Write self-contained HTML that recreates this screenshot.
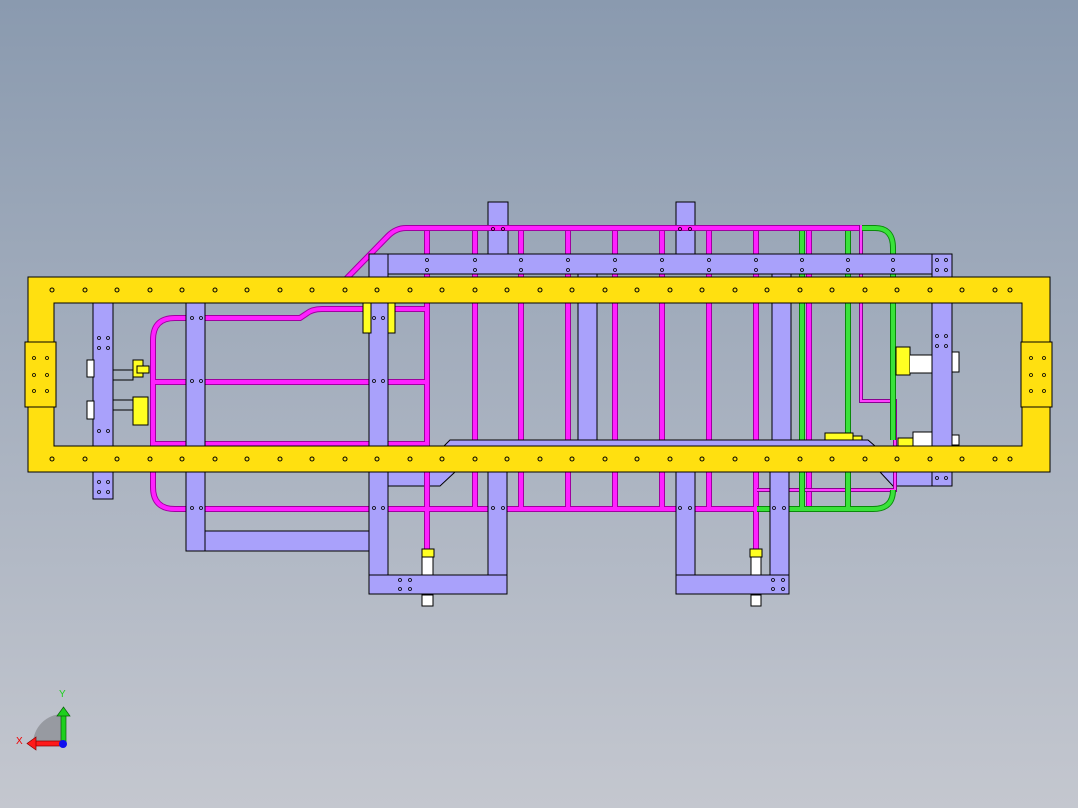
<!DOCTYPE html>
<html><head><meta charset="utf-8"><style>
html,body{margin:0;padding:0;}
body{width:1078px;height:808px;overflow:hidden;background:linear-gradient(#8a9aaf,#c3c6ce);}
svg{display:block}
</style></head><body>
<svg width="1078" height="808" viewBox="0 0 1078 808" xmlns="http://www.w3.org/2000/svg" font-family="Liberation Sans, sans-serif">
<defs>
<linearGradient id="bg" x1="0" y1="0" x2="0" y2="1"><stop offset="0" stop-color="#8a9aaf"/><stop offset="1" stop-color="#c4c7cf"/></linearGradient>
</defs>
<rect width="1078" height="808" fill="url(#bg)"/>

<g fill="#a9a1fb" stroke="#000" stroke-width="1">
<rect x="488" y="202" width="20" height="60"/>
<rect x="676" y="202" width="19" height="60"/>
<rect x="186" y="531" width="190" height="20"/>
<rect x="369" y="575" width="138" height="19"/>
<rect x="676" y="575" width="113" height="19"/>
<polygon points="388,472 455,472 440,486 388,486"/>
<polygon points="880,472 933,472 933,486 893,486"/>
</g>

<g fill="none" stroke-linecap="butt">
<g stroke="#a000a0" stroke-width="6">
<path d="M345,280 L388,236 Q396,228 406,228 L862,228"/>
<path d="M425,309 L322,309 Q312,309 306,314 L300,318 L175,318 Q153,318 153,340 L153,487 Q153,509 175,509 L757,509"/>
<path d="M155,382 L425,382 M155,444 L425,444"/>
<path d="M427,231 V575 M475,231 V508 M521,231 V508 M568,231 V508 M615,231 V508 M662,231 V508 M709,231 V508 M756,231 V555 M809,231 V508"/>
</g>
<g stroke="#ff20ff" stroke-width="4">
<path d="M345,280 L388,236 Q396,228 406,228 L862,228"/>
<path d="M425,309 L322,309 Q312,309 306,314 L300,318 L175,318 Q153,318 153,340 L153,487 Q153,509 175,509 L757,509"/>
<path d="M155,382 L425,382 M155,444 L425,444"/>
<path d="M427,231 V575 M475,231 V508 M521,231 V508 M568,231 V508 M615,231 V508 M662,231 V508 M709,231 V508 M756,231 V555 M809,231 V508"/>
</g>
<g stroke="#8a0090" stroke-width="4"><path d="M861,225 V401 H895 V490 H757"/></g>
<g stroke="#ff40ff" stroke-width="2"><path d="M861,225 V401 H895 V490 H757"/></g>
<g stroke="#0a8a0a" stroke-width="6"><path d="M862,228 L875,228 Q893,228 893,248 V440 M757,509 L873,509 Q893,509 893,490 M802,231 V508 M848,231 V508"/></g>
<g stroke="#3ae23a" stroke-width="4"><path d="M862,228 L875,228 Q893,228 893,248 V440 M757,509 L873,509 Q893,509 893,490 M802,231 V508 M848,231 V508"/></g>
</g>

<g fill="#a9a1fb" stroke="#000" stroke-width="1">
<rect x="369" y="254" width="582" height="20"/>
<rect x="932" y="254" width="20" height="232"/>
<rect x="369" y="254" width="19" height="321"/>
<rect x="488" y="472" width="19" height="103"/>
<rect x="676" y="472" width="19" height="103"/>
<rect x="770" y="472" width="19" height="103"/>
<rect x="93" y="303" width="20" height="196"/>
<rect x="186" y="303" width="19" height="248"/>
<rect x="578" y="274" width="19" height="172"/>
<rect x="772" y="274" width="19" height="172"/>
<polygon points="450,440 868,440 875,446 444,446"/>
</g>

<g stroke="#000" stroke-width="1">
<rect x="87" y="360" width="7" height="17" fill="#fff"/>
<rect x="87" y="401" width="7" height="18" fill="#fff"/>
<path d="M113,370 H133 V380 H113" fill="none"/>
<path d="M113,400 H133 V410 H113" fill="none"/>
<rect x="133" y="360" width="10" height="17" fill="#ffff22"/>
<rect x="137" y="366" width="12" height="7" fill="#ffff22"/>
<rect x="133" y="397" width="15" height="28" fill="#ffff22"/>
<rect x="363" y="303" width="8" height="30" fill="#ffff22"/>
<rect x="388" y="303" width="7" height="30" fill="#ffff22"/>
</g>
<g stroke="#000" stroke-width="1">
<rect x="896" y="347" width="14" height="28" fill="#ffff22"/>
<path d="M910,355 H932 V373 H910" fill="#fff"/>
<rect x="952" y="352" width="7" height="20" fill="#fff"/>
<rect x="952" y="435" width="7" height="10" fill="#fff"/>
<path d="M913,446 V432 H932 V446" fill="#fff"/>
<rect x="898" y="438" width="15" height="8" fill="#ffff22"/>
<rect x="825" y="433" width="28" height="7" fill="#ffff22"/>
<rect x="853" y="436" width="9" height="4" fill="#ffff22"/>
</g>
<g stroke="#000" stroke-width="1">
<rect x="422" y="549" width="12" height="8" fill="#ffff22"/>
<rect x="422" y="557" width="11" height="18" fill="#fff"/>
<rect x="422" y="595" width="11" height="11" fill="#fff"/>
<rect x="750" y="549" width="12" height="8" fill="#ffff22"/>
<rect x="751" y="557" width="10" height="18" fill="#fff"/>
<rect x="751" y="595" width="10" height="11" fill="#fff"/>
</g>

<path d="M28,277 H1050 V472 H28 Z M54,303 V446 H1022 V303 Z" fill="#ffe010" fill-rule="evenodd" stroke="#000" stroke-width="1"/>
<rect x="25" y="342" width="31" height="65" fill="#ffe010" stroke="#000"/>
<rect x="1021" y="342" width="31" height="65" fill="#ffe010" stroke="#000"/>

<g fill="none" stroke="#000" stroke-width="1">
<circle cx="52" cy="290" r="2"/><circle cx="85" cy="290" r="2"/><circle cx="117" cy="290" r="2"/><circle cx="150" cy="290" r="2"/><circle cx="182" cy="290" r="2"/><circle cx="215" cy="290" r="2"/><circle cx="247" cy="290" r="2"/><circle cx="280" cy="290" r="2"/><circle cx="312" cy="290" r="2"/><circle cx="345" cy="290" r="2"/><circle cx="377" cy="290" r="2"/><circle cx="410" cy="290" r="2"/><circle cx="442" cy="290" r="2"/><circle cx="475" cy="290" r="2"/><circle cx="507" cy="290" r="2"/><circle cx="540" cy="290" r="2"/><circle cx="572" cy="290" r="2"/><circle cx="605" cy="290" r="2"/><circle cx="637" cy="290" r="2"/><circle cx="670" cy="290" r="2"/><circle cx="702" cy="290" r="2"/><circle cx="735" cy="290" r="2"/><circle cx="767" cy="290" r="2"/><circle cx="800" cy="290" r="2"/><circle cx="832" cy="290" r="2"/><circle cx="865" cy="290" r="2"/><circle cx="897" cy="290" r="2"/><circle cx="930" cy="290" r="2"/><circle cx="962" cy="290" r="2"/><circle cx="995" cy="290" r="2"/><circle cx="1010" cy="290" r="2"/>
<circle cx="52" cy="459" r="2"/><circle cx="85" cy="459" r="2"/><circle cx="117" cy="459" r="2"/><circle cx="150" cy="459" r="2"/><circle cx="182" cy="459" r="2"/><circle cx="215" cy="459" r="2"/><circle cx="247" cy="459" r="2"/><circle cx="280" cy="459" r="2"/><circle cx="312" cy="459" r="2"/><circle cx="345" cy="459" r="2"/><circle cx="377" cy="459" r="2"/><circle cx="410" cy="459" r="2"/><circle cx="442" cy="459" r="2"/><circle cx="475" cy="459" r="2"/><circle cx="507" cy="459" r="2"/><circle cx="540" cy="459" r="2"/><circle cx="572" cy="459" r="2"/><circle cx="605" cy="459" r="2"/><circle cx="637" cy="459" r="2"/><circle cx="670" cy="459" r="2"/><circle cx="702" cy="459" r="2"/><circle cx="735" cy="459" r="2"/><circle cx="767" cy="459" r="2"/><circle cx="800" cy="459" r="2"/><circle cx="832" cy="459" r="2"/><circle cx="865" cy="459" r="2"/><circle cx="897" cy="459" r="2"/><circle cx="930" cy="459" r="2"/><circle cx="962" cy="459" r="2"/><circle cx="995" cy="459" r="2"/><circle cx="1010" cy="459" r="2"/>
</g>
<g fill="none" stroke="#000" stroke-width="0.8">
<circle cx="34" cy="358" r="1.5"/><circle cx="47" cy="358" r="1.5"/><circle cx="34" cy="375" r="1.5"/><circle cx="47" cy="375" r="1.5"/><circle cx="34" cy="391" r="1.5"/><circle cx="47" cy="391" r="1.5"/>
<circle cx="1031" cy="358" r="1.5"/><circle cx="1044" cy="358" r="1.5"/><circle cx="1031" cy="375" r="1.5"/><circle cx="1044" cy="375" r="1.5"/><circle cx="1031" cy="391" r="1.5"/><circle cx="1044" cy="391" r="1.5"/>
<circle cx="427" cy="260" r="1.5"/><circle cx="427" cy="270" r="1.5"/><circle cx="475" cy="260" r="1.5"/><circle cx="475" cy="270" r="1.5"/><circle cx="521" cy="260" r="1.5"/><circle cx="521" cy="270" r="1.5"/><circle cx="568" cy="260" r="1.5"/><circle cx="568" cy="270" r="1.5"/><circle cx="615" cy="260" r="1.5"/><circle cx="615" cy="270" r="1.5"/><circle cx="662" cy="260" r="1.5"/><circle cx="662" cy="270" r="1.5"/><circle cx="709" cy="260" r="1.5"/><circle cx="709" cy="270" r="1.5"/><circle cx="756" cy="260" r="1.5"/><circle cx="756" cy="270" r="1.5"/><circle cx="802" cy="260" r="1.5"/><circle cx="802" cy="270" r="1.5"/><circle cx="848" cy="260" r="1.5"/><circle cx="848" cy="270" r="1.5"/><circle cx="893" cy="260" r="1.5"/><circle cx="893" cy="270" r="1.5"/><circle cx="937" cy="260" r="1.5"/><circle cx="946" cy="260" r="1.5"/><circle cx="937" cy="270" r="1.5"/><circle cx="946" cy="270" r="1.5"/>
<circle cx="99" cy="338" r="1.5"/><circle cx="108" cy="338" r="1.5"/><circle cx="99" cy="348" r="1.5"/><circle cx="108" cy="348" r="1.5"/><circle cx="99" cy="431" r="1.5"/><circle cx="108" cy="431" r="1.5"/><circle cx="99" cy="482" r="1.5"/><circle cx="108" cy="482" r="1.5"/><circle cx="99" cy="492" r="1.5"/><circle cx="108" cy="492" r="1.5"/>
<circle cx="192" cy="318" r="1.5"/><circle cx="201" cy="318" r="1.5"/><circle cx="192" cy="381" r="1.5"/><circle cx="201" cy="381" r="1.5"/><circle cx="192" cy="508" r="1.5"/><circle cx="201" cy="508" r="1.5"/>
<circle cx="374" cy="318" r="1.5"/><circle cx="383" cy="318" r="1.5"/><circle cx="374" cy="381" r="1.5"/><circle cx="383" cy="381" r="1.5"/><circle cx="374" cy="508" r="1.5"/><circle cx="383" cy="508" r="1.5"/>
<circle cx="493" cy="229" r="1.5"/><circle cx="503" cy="229" r="1.5"/><circle cx="680" cy="229" r="1.5"/><circle cx="690" cy="229" r="1.5"/>
<circle cx="493" cy="508" r="1.5"/><circle cx="503" cy="508" r="1.5"/><circle cx="680" cy="508" r="1.5"/><circle cx="690" cy="508" r="1.5"/><circle cx="774" cy="508" r="1.5"/><circle cx="784" cy="508" r="1.5"/>
<circle cx="400" cy="580" r="1.5"/><circle cx="410" cy="580" r="1.5"/><circle cx="400" cy="589" r="1.5"/><circle cx="410" cy="589" r="1.5"/><circle cx="773" cy="580" r="1.5"/><circle cx="783" cy="580" r="1.5"/><circle cx="773" cy="589" r="1.5"/><circle cx="783" cy="589" r="1.5"/>
<circle cx="937" cy="336" r="1.5"/><circle cx="946" cy="336" r="1.5"/><circle cx="937" cy="346" r="1.5"/><circle cx="946" cy="346" r="1.5"/><circle cx="937" cy="478" r="1.5"/><circle cx="946" cy="478" r="1.5"/>
</g>

<path d="M33,744 A30,30 0 0 1 63,714 V744 Z" fill="#8d9096" opacity="0.8"/>
<rect x="61" y="714" width="5" height="28" fill="#1ed01e" stroke="#0a600a" stroke-width="0.7"/>
<polygon points="57,716 63.5,707 70,716" fill="#1ed01e" stroke="#0a600a" stroke-width="0.7"/>
<rect x="34" y="741" width="28" height="5" fill="#ff1a1a" stroke="#800" stroke-width="0.7"/>
<polygon points="36,737 27,743.5 36,750" fill="#ff1a1a" stroke="#800" stroke-width="0.7"/>
<circle cx="63" cy="744" r="4" fill="#1010ee"/>
<text x="59" y="697" font-size="10" fill="#1ed01e">Y</text>
<text x="16" y="744" font-size="10" fill="#e00">X</text>
</svg>
</body></html>
